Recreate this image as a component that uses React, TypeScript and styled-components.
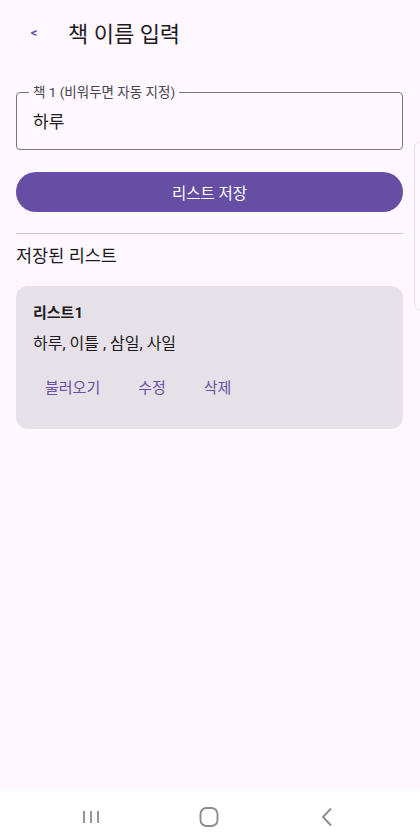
import styled, { createGlobalStyle } from 'styled-components';

const GlobalStyle = createGlobalStyle`
  html, body {
    margin: 0;
    padding: 0;
    background: #fef7ff;
  }
  body {
    font-family: Roboto, "Noto Sans CJK KR", sans-serif;
    color: #1d1b20;
  }
`;

const Screen = styled.div`
  position: relative;
  width: 420px;
  height: 840px;
  display: flex;
  flex-direction: column;
  background: #fef7ff;
  overflow: hidden;
`;

const TopBar = styled.div`
  display: flex;
  align-items: center;
  height: 64px;
  padding: 0 0 0 16px;
`;

const BackButton = styled.button`
  width: 36px;
  height: 36px;
  border: none;
  background: none;
  padding: 0;
  color: #6750a4;
  font-family: inherit;
  font-size: 13px;
  font-weight: 700;
  cursor: pointer;
`;

const Title = styled.h1`
  margin: 0 0 0 16px;
  font-size: 22px;
  font-weight: 400;
`;

const Content = styled.main`
  flex: 1;
  display: flex;
  flex-direction: column;
  padding: 28px 17px 0 16px;
`;

const Field = styled.div`
  position: relative;
  height: 58px;
  padding: 0 16px;
  border: 1px solid #79747e;
  border-radius: 4px;
  display: flex;
  align-items: center;
  box-sizing: border-box;
`;

const FieldLabel = styled.label`
  position: absolute;
  left: 12px;
  top: -9px;
  padding: 0 4px;
  font-size: 13.5px;
  line-height: 16px;
  color: #49454f;
  background: #fef7ff;
`;

const FieldValue = styled.input`
  border: none;
  outline: none;
  background: transparent;
  font-family: inherit;
  font-size: 17px;
  color: #1d1b20;
  width: 100%;
  padding: 0;
  margin-top: -2px;
`;

const PrimaryButton = styled.button`
  margin-top: 22px;
  height: 40px;
  border: none;
  border-radius: 20px;
  background: #654ea3;
  color: #ffffff;
  font-family: inherit;
  font-size: 15.5px;
`;

const Divider = styled.hr`
  margin: 21px 0 0;
  border: none;
  border-top: 1px solid #cac4d0;
`;

const SectionTitle = styled.h2`
  margin: 10px 0 0;
  font-size: 17.5px;
  font-weight: 400;
  line-height: 24px;
`;

const Card = styled.section`
  margin-top: 18px;
  border-radius: 12px;
  background: #e6e0e9;
  padding: 16px 17px 23px;
  display: flex;
  flex-direction: column;
`;

const CardTitle = styled.h3`
  margin: 0;
  font-size: 15px;
  font-weight: 700;
  line-height: 22px;
`;

const CardBody = styled.p`
  margin: 9px 0 0;
  font-size: 16px;
  line-height: 22px;
  color: #1d1b20;
`;

const Actions = styled.div`
  display: flex;
  gap: 14px;
  margin-top: 11px;
`;

const TextButton = styled.button`
  height: 40px;
  padding: 0 12px;
  border: none;
  background: none;
  color: #6750a4;
  font-family: inherit;
  font-size: 15px;
`;

const EdgeHandle = styled.div`
  position: absolute;
  right: -8px;
  top: 141px;
  width: 12px;
  height: 168px;
  border: 1px solid #e3dde6;
  border-radius: 8px;
  background: #fdf8fe;
`;

const NavBar = styled.nav`
  height: 50px;
  background: #ffffff;
  display: flex;
  align-items: center;
  justify-content: center;
  gap: 94px;
  padding: 4px 3px 0 0;
  box-sizing: border-box;
`;

const NavIcon = styled.svg`
  width: 24px;
  height: 24px;
  color: #8c8c8c;
`;

export default function App() {
  return (
    <Screen>
      <GlobalStyle />
      <TopBar>
        <BackButton>&lt;</BackButton>
        <Title>책 이름 입력</Title>
      </TopBar>
      <Content>
        <Field>
          <FieldLabel>책 1 (비워두면 자동 지정)</FieldLabel>
          <FieldValue defaultValue="하루" />
        </Field>
        <PrimaryButton>리스트 저장</PrimaryButton>
        <Divider />
        <SectionTitle>저장된 리스트</SectionTitle>
        <Card>
          <CardTitle>리스트1</CardTitle>
          <CardBody>하루, 이틀 , 삼일, 사일</CardBody>
          <Actions>
            <TextButton>불러오기</TextButton>
            <TextButton>수정</TextButton>
            <TextButton>삭제</TextButton>
          </Actions>
        </Card>
      </Content>
      <NavBar>
        <NavIcon viewBox="0 0 24 24" fill="none" stroke="currentColor" strokeWidth="1.8">
          <path d="M5 6v12M12 6v12M19 6v12" />
        </NavIcon>
        <NavIcon viewBox="0 0 24 24" fill="none" stroke="currentColor" strokeWidth="1.9">
          <rect x="3.5" y="3" width="17" height="18" rx="6" />
        </NavIcon>
        <NavIcon viewBox="0 0 24 24" fill="none" stroke="currentColor" strokeWidth="1.9">
          <path d="M16 3.5L8 12l8 8.5" />
        </NavIcon>
      </NavBar>
      <EdgeHandle />
    </Screen>
  );
}
